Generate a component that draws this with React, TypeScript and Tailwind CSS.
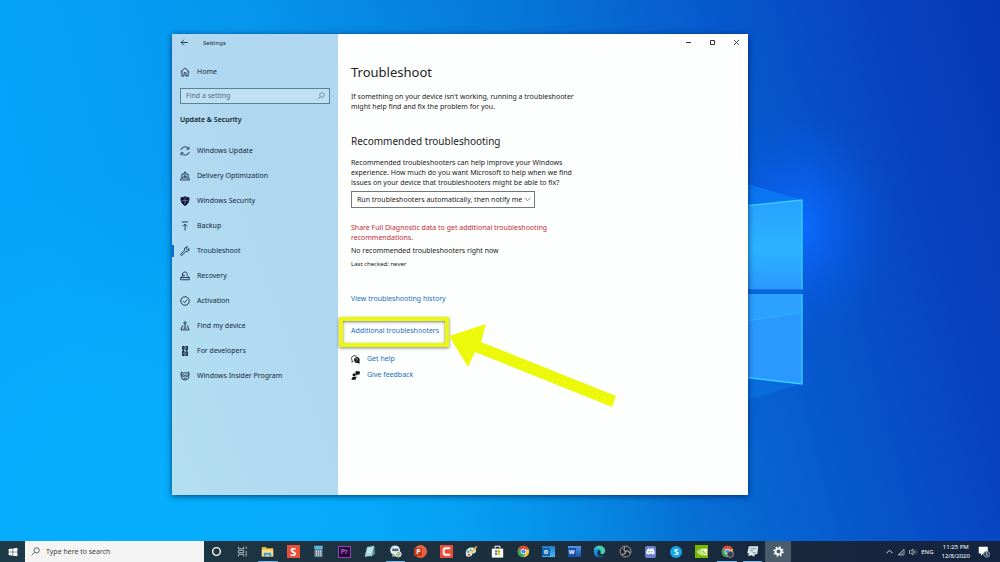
import { useState } from "react"
import type { ReactNode } from "react"
import { FaDiscord } from "react-icons/fa"
import { SiNvidia } from "react-icons/si"

/* ---------- line icons ---------- */

const Line = ({ children }: { children: ReactNode }) => (
  <svg viewBox="0 0 16 16" className="size-[10px] shrink-0" fill="none" stroke="currentColor" strokeWidth="1.4" aria-hidden="true">
    {children}
  </svg>
)

const HomeIcon = () => (
  <Line>
    <path d="M1 8 8 1.500 15 8M3 6.500V14.500h3.500V10a1.500 1.500 0 0 1 3 0v4.500H13V6.500" />
  </Line>
)

const navItems: { label: string; icon: ReactNode }[] = [
  {
    label: "Windows Update",
    icon: <Line><path d="M1.200 6.500A7 7 0 0 1 13.800 4.500M14.300 1v4h-4M14.800 9.500A7 7 0 0 1 2.200 11.500M1.700 15v-4h4" /></Line>,
  },
  {
    label: "Delivery Optimization",
    icon: <Line><path d="M3 11V5h3M13 11V5h-3M.5 14.300h15L13.500 11h-11zM8 9V1.500M5.500 4 8 1.300 10.500 4M5.500 8.500h5" /></Line>,
  },
  {
    label: "Windows Security",
    icon: (
      <Line>
        <path d="M8 1c2 1.300 4 1.800 6.500 1.800C14.500 9 13 12.500 8 15.300 3 12.500 1.500 9 1.500 2.800 4 2.800 6 2.300 8 1z" fill="#12123a" stroke="#12123a" />
        <path d="M8 3v10M3 7.500h10" stroke="#7f9fc4" strokeWidth="1" />
      </Line>
    ),
  },
  { label: "Backup", icon: <Line><path d="M3 1.500h10M8 15V5M4.500 8.500 8 5l3.500 3.500" /></Line> },
  {
    label: "Troubleshoot",
    icon: <Line><path d="M14.500 4 12 6.300 9.700 4 12.300 1.500A4.200 4.200 0 0 0 7.300 7L1.500 12.700a1.300 1.300 0 0 0 1.900 1.900L9.200 8.900A4.200 4.200 0 0 0 14.500 4z" /></Line>,
  },
  {
    label: "Recovery",
    icon: <Line><path d="M1 10.500h14V14H1zM3 10.500V8M13 10.500V8M4.500 7A3.800 3.800 0 1 1 11 7.500M4 3.500V7.500h4" /></Line>,
  },
  { label: "Activation", icon: <Line><circle cx="8" cy="8" r="6.800" /><path d="m4.800 8.200 2.400 2.400 4.300-4.500" /></Line> },
  {
    label: "Find my device",
    icon: <Line><circle cx="8" cy="3" r="1.800" /><path d="M8 5v6.500M5 7.500H4L1.500 14.300h13L12 7.500h-1M5.500 11.500h5" /></Line>,
  },
  {
    label: "For developers",
    icon: <Line><path d="M4.200 1h2.300v4H4.200zM9.500 1h2.300v5H9.500zM4.200 9h2.300v6H4.200zM9.500 10h2.300v5H9.500zM5.300 5v4M10.600 6v4" strokeWidth="1.700" /></Line>,
  },
  {
    label: "Windows Insider Program",
    icon: (
      <Line>
        <path d="M2 1.500l3 2a7 7 0 0 1 6 0l3-2v7a6 6 0 0 1-12 0z" />
        <circle cx="5.500" cy="7.500" r="1.600" /><circle cx="10.500" cy="7.500" r="1.600" /><path d="M6 11.500h4M.5 5l1.500 1M15.500 5 14 6" />
      </Line>
    ),
  },
]

const SearchIcon = ({ className }: { className: string }) => (
  <svg viewBox="0 0 16 16" className={className} fill="none" stroke="currentColor" strokeWidth="1.300" aria-hidden="true">
    <circle cx="10" cy="6" r="4.700" />
    <path d="M6.600 9.400 1 15" />
  </svg>
)

const HelpIcon = () => (
  <svg viewBox="0 0 16 16" className="size-[9px] shrink-0" aria-hidden="true">
    <path d="M4 11.500 1.500 12.500 2 9.500A5 5 0 1 1 10 3" fill="none" stroke="#111" strokeWidth="1.400" />
    <path d="M10 3.500a5.300 5.300 0 0 1 4.900 7.400l.9 4.300-4-1.200A5.300 5.300 0 1 1 10 3.500z" fill="#111" />
    <path d="M8.500 7.500c0-2 3-2 3 0 0 1.200-1.500 1.200-1.500 2.500M10 11v1.200" fill="none" stroke="#fff" strokeWidth="1.100" />
  </svg>
)

const FeedbackIcon = () => (
  <svg viewBox="0 0 16 16" className="size-[9px] shrink-0" fill="#111" aria-hidden="true">
    <circle cx="5.500" cy="6.500" r="2.700" />
    <path d="M1 15.500c0-3.500 1.500-5.500 4.500-5.500H10v2H8.500v3.500zM8 .5h7.500v5.500H12L9.500 8.500V6H8z" />
  </svg>
)

/* ---------- taskbar icons ---------- */

const Pic = ({ children }: { children: ReactNode }) => (
  <svg viewBox="0 0 16 16" className="size-[13px]" aria-hidden="true">{children}</svg>
)

const Chrome = ({ badge }: { badge?: boolean }) => (
  <Pic>
    <circle cx="8" cy="8" r="7" fill="#f4c63a" />
    <path d="M8 8 1.900 4.500A7 7 0 0 1 14.100 4.500z" fill="#e2483a" />
    <path d="M8 8 1.900 4.500A7 7 0 0 0 7.500 15l3-5z" fill="#3ba757" />
    <circle cx="8" cy="8" r="3.400" fill="#fff" />
    <circle cx="8" cy="8" r="2.600" fill="#4486f4" />
    {badge && <circle cx="11.500" cy="11.500" r="4" fill="#33445a" stroke="#c9a292" strokeWidth="0.800" />}
  </Pic>
)

const apps: { name: string; icon: ReactNode; running?: boolean; active?: boolean }[] = [
  { name: "Cortana", icon: <Pic><circle cx="8" cy="8" r="4.700" fill="none" stroke="#fff" strokeWidth="1.700" /></Pic> },
  {
    name: "Task View",
    icon: <Pic><path d="M3 2v2.500h6.500V2M3 14v-2.500h6.500V14M3 6.500h6.500v3H3zM12.500 2v3M12.500 7.500v6.500" fill="none" stroke="#cfd8dc" /></Pic>,
  },
  {
    name: "File Explorer",
    running: true,
    icon: (
      <Pic>
        <path d="M1 2.500h5l1 1.500h8v10H1z" fill="#e9b53c" /><path d="M1 5.500h14v8.500H1z" fill="#fbe08a" />
        <path d="M3.500 14V9.500h9V14h-2.500v-2h-4v2z" fill="#3d9be0" />
      </Pic>
    ),
  },
  { name: "Snagit", icon: <span className="flex size-[13px] items-center justify-center bg-[#e8503c] text-[11px] leading-none font-bold text-white">S</span> },
  {
    name: "Calculator",
    icon: (
      <Pic>
        <path d="M3 1h10v14H3z" fill="#607d8b" /><path d="M3 1h10v4H3z" fill="#58b8ea" />
        <path d="M4.500 7.500h7M4.500 10h7M4.500 12.500h7" stroke="#e6eef2" strokeWidth="1.500" strokeDasharray="1.700 1" />
      </Pic>
    ),
  },
  { name: "Premiere Pro", icon: <span className="flex h-[12px] w-[13px] items-center justify-center border border-[#8e44b0] bg-[#2c0538] text-[7px] leading-none text-[#d894f2]">Pr</span> },
  {
    name: "Notepad",
    icon: <Pic><path d="M5 2.500 14 1 11.500 13.500 2 14.500z" fill="#9fd3dc" /><path d="M11.500 13.500 14 1l1 10z" fill="#4f8c96" /><path d="M5.500 5 12 4M5 7.500l6.500-1M4.500 10l6-1" stroke="#e9f8fa" /></Pic>,
  },
  {
    name: "Snagit Editor",
    running: true,
    icon: (
      <Pic>
        <circle cx="7.500" cy="6.500" r="6" fill="#dfe8ee" /><path d="M4 4.500h7.500v3H4z" fill="#4b6678" />
        <path d="M3.500 14c2-4 6-4 8 0z" fill="#b6c4cc" /><circle cx="11.700" cy="11.300" r="3.400" fill="#a9bd8c" stroke="#eef" />
      </Pic>
    ),
  },
  {
    name: "PowerPoint",
    icon: (
      <span className="relative flex size-[13px] items-center rounded-full bg-[#e8623f]">
        <span className="flex size-[8px] items-center justify-center bg-[#c13b1b] text-[7px] leading-none font-bold text-white">P</span>
      </span>
    ),
  },
  {
    name: "Camtasia",
    icon: <Pic><path d="M0 0h16v16H0z" fill="#e8503c" /><path d="M12.500 4H6L4.500 5.500v5L6 12h6.500" fill="none" stroke="#fff" strokeWidth="2.200" /></Pic>,
  },
  {
    name: "Paint",
    icon: (
      <Pic>
        <path d="M1 10C1 5 5 2.500 9.500 3s5 5 3 6.500-3 0-3.500 2S6 15 3.500 14.500 1 11.500 1 10z" fill="#dcebdc" />
        <circle cx="4" cy="8.500" r="1.300" fill="#3f8ed0" /><circle cx="7" cy="6.500" r="1.300" fill="#4cae50" /><circle cx="5" cy="12" r="1.300" fill="#d84b3a" />
        <path d="M8 9.500 14.500 1.500" stroke="#e6b34a" strokeWidth="1.800" />
      </Pic>
    ),
  },
  {
    name: "Microsoft Store",
    icon: (
      <Pic>
        <path d="M1 4.500h14V15.500H1z" fill="#fff" /><path d="M5 4.500V1.500h6v3" fill="none" stroke="#fff" strokeWidth="1.200" />
        <path d="M5 6.500h2.700v2.700H5z" fill="#f25022" /><path d="M8.300 6.500H11v2.700H8.300z" fill="#7fba00" />
        <path d="M5 9.800h2.700v2.700H5z" fill="#00a4ef" /><path d="M8.300 9.800H11v2.700H8.300z" fill="#ffb900" />
      </Pic>
    ),
  },
  { name: "Google Chrome", icon: <Chrome /> },
  {
    name: "Outlook",
    icon: (
      <span className="flex h-[11px] w-[13px] items-center bg-linear-to-b from-[#1f7ad0] to-[#4db8f0]">
        <span className="flex size-[8px] items-center justify-center bg-[#0f62b5] text-[7px] leading-none font-bold text-white">o</span>
      </span>
    ),
  },
  {
    name: "Word",
    icon: (
      <span className="flex h-[11px] w-[13px] items-center bg-linear-to-b from-[#4a9ceb] to-[#1c4fa8]">
        <span className="flex size-[8px] items-center justify-center bg-[#1a50ad] text-[6px] leading-none font-bold text-white">W</span>
      </span>
    ),
  },
  {
    name: "Microsoft Edge",
    icon: (
      <Pic>
        <path d="M1 8C1 3.500 4.500 1 8 1s7 2.500 7 6.500c0 2.500-2 3.500-4 3.500-1.500 0-2.200-.5-1.500-1.500C10 7 8.500 6 7 6.500c-2 1-2.500 4-.5 6 2 1.800 5 1.500 7 .2C12 14.500 10 15 8 15c-4 0-7-3-7-7z" fill="#1b8fdc" />
        <path d="M1.200 7A7 7 0 0 1 8 1c3.500 0 7 2.500 7 6.500 0 2.500-2 3.500-4 3.500-1.500 0-2.200-.5-1.500-1.500C10.500 6 7 4 4.500 4.800 3 5.200 1.800 6 1.200 7z" fill="#46cfa0" />
        <path d="M1.200 7A7 7 0 0 1 8 1C5 2 4.500 3.500 4.500 4.800 3 5.200 1.800 6 1.200 7z" fill="#2fb6d8" />
        <path d="M5 9c0 3 2.500 5 5 5 1.500 0 2.800-.5 3.500-1.300C11.500 15 10 15 8 15 5.500 14.500 4.500 12 5 9z" fill="#0d4f9e" />
      </Pic>
    ),
  },
  {
    name: "OBS Studio",
    icon: (
      <Pic>
        <circle cx="8" cy="8" r="6.700" fill="#25232a" stroke="#b9b9be" strokeWidth="1" />
        <path d="M8 8C5.500 7 5.500 4 7.500 2.800M8 8c2-1.700 4.800-.5 5 2M8 8c.4 2.600-2 4.400-4.500 3" fill="none" stroke="#b9b9be" strokeWidth="1.300" />
      </Pic>
    ),
  },
  { name: "Discord", icon: <span className="flex h-[12px] w-[11px] items-center justify-center rounded-xs bg-[#6c7fd0] text-white"><FaDiscord className="size-[9px]" /></span> },
  { name: "Skype", icon: <span className="flex size-[12px] items-center justify-center rounded-full bg-[#12a5e8] text-[9px] leading-none font-bold text-white">S</span> },
  { name: "NVIDIA", icon: <span className="flex size-[13px] items-center justify-center bg-[#76b900] text-white"><SiNvidia className="size-[10px]" /></span> },
  { name: "Google Chrome profile", running: true, icon: <Chrome badge /> },
  {
    name: "Messages",
    running: true,
    icon: (
      <Pic>
        <path d="M3.500 1.500h11.500L14 11l-3 .5-1 3-3-2-4.500 1L3.500 10H1.500z" fill="#dce6ea" />
        <path d="M5.500 4.500h7M5 7h4M8 9.500h4" stroke="#6b808e" />
      </Pic>
    ),
  },
  {
    name: "Settings",
    active: true,
    icon: (
      <Pic>
        <circle cx="8" cy="8" r="5.400" fill="none" stroke="#fff" strokeWidth="2" strokeDasharray="2.120 2.120" />
        <circle cx="8" cy="8" r="3.500" fill="none" stroke="#fff" strokeWidth="2" />
      </Pic>
    ),
  },
]

/* ---------- page parts ---------- */

const Wallpaper = () => (
  <svg viewBox="0 0 1000 562" preserveAspectRatio="none" className="absolute inset-0 size-full" aria-hidden="true">
    <defs>
      <linearGradient id="sky" x1="0" y1="0.150" x2="1" y2="0">
        <stop offset="0" stopColor="#05a3fb" />
        <stop offset="0.250" stopColor="#0697ee" />
        <stop offset="0.500" stopColor="#067ad9" />
        <stop offset="0.720" stopColor="#0758cd" />
        <stop offset="0.880" stopColor="#0742c0" />
        <stop offset="1" stopColor="#0638b4" />
      </linearGradient>
      <radialGradient id="glow">
        <stop offset="0" stopColor="#0a6cff" />
        <stop offset="0.350" stopColor="#0a66fa" stopOpacity="0.600" />
        <stop offset="1" stopColor="#0a58e0" stopOpacity="0" />
      </radialGradient>
      <radialGradient id="low">
        <stop offset="0" stopColor="#06b0fd" stopOpacity="0.900" />
        <stop offset="0.500" stopColor="#06b0fd" stopOpacity="0.600" />
        <stop offset="1" stopColor="#06b0fd" stopOpacity="0" />
      </radialGradient>
      <linearGradient id="pane" x1="0" y1="0" x2="0" y2="1">
        <stop offset="0" stopColor="#27a2ff" />
        <stop offset="0.550" stopColor="#2bb2ff" />
        <stop offset="1" stopColor="#2a98ff" />
      </linearGradient>
    </defs>
    <path d="M0 0h1000v562H0z" fill="url(#sky)" />
    <ellipse cx="200" cy="500" rx="480" ry="330" fill="url(#low)" />
    <ellipse cx="800" cy="225" rx="95" ry="120" fill="url(#glow)" />
    <path d="M748 184 802 200 748 207z" fill="#0c80f8" opacity="0.700" />
    <path d="M748 376 802 384 748 400z" fill="#0a78ee" opacity="0.500" />
    <path d="M600 220 802 200v89.500H600z" fill="url(#pane)" />
    <path d="M600 294h202v90L600 358z" fill="#2a98ff" />
    <path d="M748 294h54v19l-54 8z" fill="#2ba2ff" />
    <path d="M600 221 802 200v89.500M802 294v90L600 360" fill="none" stroke="#3ccfff" strokeWidth="1.300" />
    <path d="M748 320.500 800 313" fill="none" stroke="#34b4ff" />
    <path d="M600 291.800h202" stroke="#0668da" strokeWidth="4" />
  </svg>
)

const Sidebar = () => {
  const [query, setQuery] = useState("")

  return (
    <aside className="w-[166px] shrink-0 bg-linear-to-tr from-[#b3e0f1] to-[#b0d7f0] to-60% text-[#12283c]">
      <div className="flex h-[17px] items-center gap-[14px] px-2 text-[6px]">
        <button type="button" aria-label="Back">
          <svg viewBox="0 0 16 16" className="size-[9px]" fill="none" stroke="currentColor" strokeWidth="1.500"><path d="M14 8H2M7 3 2 8l5 5" /></svg>
        </button>
        <span>Settings</span>
      </div>

      <a href="#home" className="mt-4 flex h-[10px] items-center gap-[7px] px-2"><HomeIcon />Home</a>

      <label className="mx-2 mt-[11px] flex h-[16px] items-center border border-[#5e7f95] bg-[#bfe0f3] px-1">
        <input
          type="text" aria-label="Find a setting" placeholder="Find a setting"
          value={query} onChange={(e) => setQuery(e.target.value)}
          className="min-w-0 flex-1 bg-transparent px-px outline-none placeholder:text-[#4f6b7f]"
        />
        <SearchIcon className="size-[8px] text-[#4f6b7f]" />
      </label>

      <h2 className="mt-[11px] px-2 font-semibold text-[#0b1b2a]">Update &amp; Security</h2>

      <nav className="mt-[13px]">
        {navItems.map((item) => (
          <a key={item.label} href="#settings" className="relative flex h-[25px] items-center gap-[7px] px-2">
            {item.label === "Troubleshoot" && <span className="absolute left-0 h-3 w-[2px] bg-[#0a6fd0]" />}
            {item.icon}
            {item.label}
          </a>
        ))}
      </nav>
    </aside>
  )
}

const Content = () => (
  <main className="min-w-0 flex-1 bg-[#fdfefe] text-[#222]">
    <div className="flex h-[17px] items-center justify-end gap-[15px] pr-[7px] text-[#333]">
      <button type="button" aria-label="Minimize"><svg viewBox="0 0 9 9" className="size-[9px]" stroke="currentColor"><path d="M2 4.500h5" /></svg></button>
      <button type="button" aria-label="Maximize"><svg viewBox="0 0 9 9" className="size-[9px]" fill="none" stroke="currentColor"><path d="M2.500 2.500h4v4h-4z" /></svg></button>
      <button type="button" aria-label="Close"><svg viewBox="0 0 9 9" className="size-[9px]" stroke="currentColor" strokeWidth="0.900"><path d="m2 2 5 5M7 2 2 7" /></svg></button>
    </div>

    <div className="pl-[13px]">
      <h1 className="mt-3 text-[13px] leading-[18px]">Troubleshoot</h1>
      <p className="mt-[11px]">
        If something on your device isn't working, running a troubleshooter<br />
        might help find and fix the problem for you.
      </p>

      <h2 className="mt-[22px] text-[10px] leading-[14px]">Recommended troubleshooting</h2>
      <p className="mt-[10px]">
        Recommended troubleshooters can help improve your Windows<br />
        experience. How much do you want Microsoft to help when we find<br />
        issues on your device that troubleshooters might be able to fix?
      </p>
      <div className="relative mt-[3px] w-[184px]">
        <select aria-label="Recommended troubleshooting" className="block h-[17px] w-full appearance-none border border-[#777] bg-white pl-[5px]">
          <option>Run troubleshooters automatically, then notify me</option>
        </select>
        <svg viewBox="0 0 8 8" className="pointer-events-none absolute top-[5px] right-1 size-[7px]" fill="none" stroke="#777"><path d="m.5 2 3.500 3.500L7.500 2" /></svg>
      </div>

      <p className="mt-[15px] text-[#c42a35]">
        Share Full Diagnostic data to get additional troubleshooting<br />
        recommendations.
      </p>
      <p className="mt-[3px]">No recommended troubleshooters right now</p>
      <p className="mt-[3px] text-[6px]">Last checked: never</p>

      <div className="mt-[25px] flex flex-col items-start text-[#1a6fc0]">
        <a href="#history">View troubleshooting history</a>
        <div className="relative mt-[22px]">
          <a href="#additional">Additional troubleshooters</a>
          {/* callout drawn over the page */}
          <span className="pointer-events-none absolute -top-[9px] -left-3 h-[30px] w-[110px] border-4 border-[#edf90a] shadow-[0_1px_3px_rgba(0,0,0,0.5),inset_0_1px_3px_rgba(0,0,0,0.5)]" />
          <svg viewBox="0 0 168 85" className="pointer-events-none absolute -top-[3px] left-[98px] h-[85px] w-[168px]" aria-hidden="true">
            <path d="M0 13 37 1l-5 18L167 73l-4 11L26 29l-7 15z" fill="#edf90a" />
          </svg>
        </div>
        <a href="#help" className="mt-[18px] flex items-center gap-[7px]"><HelpIcon />Get help</a>
        <a href="#feedback" className="mt-[6px] flex items-center gap-[7px]"><FeedbackIcon />Give feedback</a>
      </div>
    </div>
  </main>
)

const Taskbar = () => (
  <footer className="relative flex h-[21px] items-stretch bg-linear-to-r from-[#1d3a48] via-[#1c2f3e] to-[#14233f] text-white">
    <button type="button" aria-label="Start" className="flex w-[25px] items-center justify-center">
      <svg viewBox="0 0 16 16" className="size-[10px]" fill="#fff"><path d="M1 3.200 7.300 2.300v5.300H1zM8.200 2.200 15 1.200v6.400H8.200zM1 8.500h6.300v5.300L1 12.900zM8.200 8.500H15v6.300l-6.800-1z" /></svg>
    </button>
    <label className="flex w-[179px] items-center gap-[6px] bg-[#f4f4f4] px-[6px] text-[#333]">
      <SearchIcon className="size-[9px]" />
      <input type="text" aria-label="Search" placeholder="Type here to search" className="min-w-0 flex-1 bg-transparent outline-none placeholder:text-[#444]" />
    </label>
    <div className="grid w-[58.700%] grid-cols-[repeat(23,minmax(0,1fr))]">
      {apps.map((app) => (
        <button
          key={app.name} type="button" aria-label={app.name}
          className={"relative flex items-center justify-center " + (app.active ? "bg-[#4a5b6c]" : "")}
        >
          {app.icon}
          {app.running && <span className="absolute inset-x-[3px] bottom-0 h-px bg-[#76b9ed]" />}
        </button>
      ))}
    </div>
    <div className="ml-auto flex items-center gap-1 pr-[10px] text-[6px]">
      <svg viewBox="0 0 8 8" className="size-[7px]" fill="none" stroke="#fff"><path d="M.5 6 4 2.500 7.500 6" /></svg>
      <svg viewBox="0 0 16 16" className="size-[8px]" fill="none" stroke="#b5bfca" strokeWidth="1.500"><path d="M2 14 14 2v12zM6 14v-4M10 14V6" /></svg>
      <svg viewBox="0 0 16 16" className="size-[8px]" fill="none" stroke="#e5eaf0" strokeWidth="1.300"><path d="M1 5.500h3L8 2v12L4 10.500H1zM10.500 5.500c1 1.500 1 3.500 0 5" /><path d="M13 3.500c2 2.500 2 6.500 0 9" stroke="#8a96a6" /></svg>
      <span>ENG</span>
      <div className="mx-1 text-center leading-[9px]">
        <div>11:25 PM</div>
        <div>12/8/2020</div>
      </div>
      <svg viewBox="0 0 16 16" className="size-[12px]"><path d="M1 1h12v9H7l-3 3v-3H1z" fill="#fff" /><circle cx="11.500" cy="11" r="4" fill="#2a3a50" stroke="#aab5c2" /><path d="M10.800 9.500l1-.7V13.500" fill="none" stroke="#fff" /></svg>
    </div>
  </footer>
)

const App = () => (
  <div className="relative flex min-h-screen flex-col overflow-hidden font-['Noto_Sans','Open_Sans',sans-serif] text-[7px] leading-[10px]">
    <Wallpaper />
    <div className="relative flex flex-1 pt-[34px] pr-[25.200%] pb-[46px] pl-[17.200%]">
      <div className="flex flex-1 shadow-[0_1px_6px_rgba(0,20,70,0.700)]">
        <Sidebar />
        <Content />
      </div>
    </div>
    <Taskbar />
  </div>
)

export default App
